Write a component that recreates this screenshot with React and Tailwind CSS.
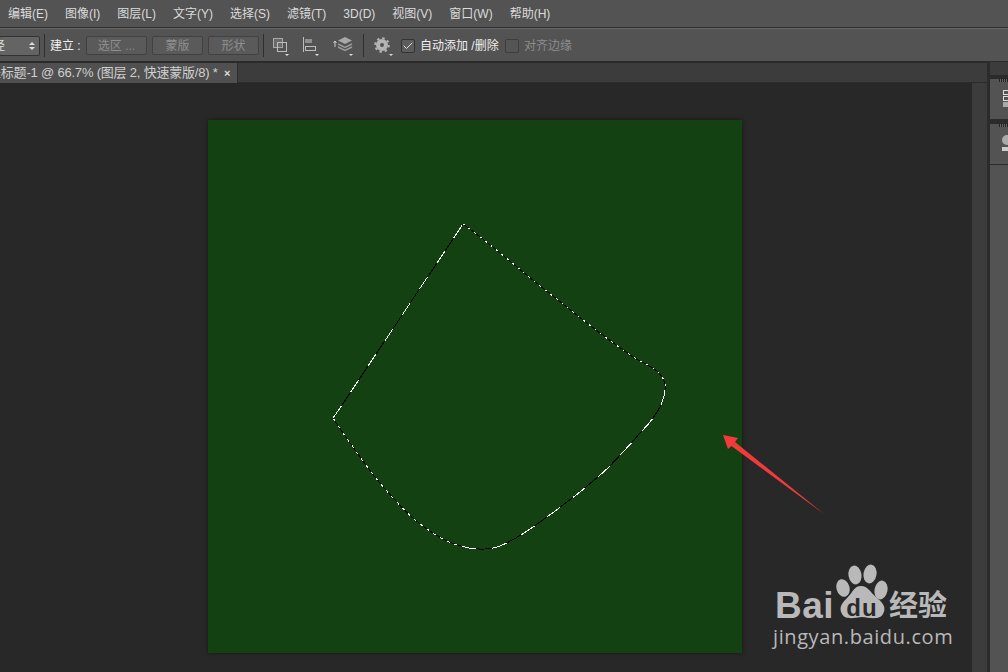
import React from "react";
import { Check } from "lucide-react";

const cjk = { fontFamily: '"Liberation Sans", "Noto Sans CJK SC", sans-serif' };
const menus = ["编辑(E)", "图像(I)", "图层(L)", "文字(Y)", "选择(S)", "滤镜(T)", "3D(D)", "视图(V)", "窗口(W)", "帮助(H)"];

function Sep({ className = "" }) {
  return <div className={"w-px h-[23px] bg-[#2e2e2e] shrink-0 " + className} />;
}

function OptBtn({ w, children }) {
  return (
    <div className={"h-[19px] flex items-center justify-center rounded-[2px] border border-[#414141] bg-[#5a5a5a] text-[12px] text-[#8f8f8f] shrink-0 " + w}>
      {children}
    </div>
  );
}

function PathOpsIcon() {
  return (
    <svg width="18" height="20" viewBox="0 0 18 20" fill="none" className="shrink-0">
      <rect x="1.500" y="2.500" width="9" height="9" stroke="#a8a8a8" fill="#6a6a6a" />
      <rect x="5.500" y="6.500" width="9" height="9" stroke="#bdbdbd" />
      <path d="M13 18h4l-2 2z" fill="#ddd" />
    </svg>
  );
}

function AlignIcon() {
  return (
    <svg width="18" height="20" viewBox="0 0 18 20" fill="none" className="shrink-0">
      <path d="M1.500 1v15" stroke="#bdbdbd" />
      <rect x="3" y="3" width="7" height="4" fill="#8f8f8f" />
      <rect x="3.500" y="10.500" width="10" height="4" stroke="#bdbdbd" />
      <path d="M13 18h4l-2 2z" fill="#ddd" />
    </svg>
  );
}

function StackIcon() {
  return (
    <svg width="22" height="22" viewBox="0 0 22 22" fill="none" className="shrink-0">
      <path d="M2 6v6M0.500 8 2 6l1.500 2" stroke="#ccc" />
      <path d="M12 2l7 3.500-7 3.500-7-3.500z" fill="#a8a8a8" />
      <path d="M5 9l7 3.500 7-3.500M5 12l7 3.500 7-3.500" stroke="#9a9a9a" strokeWidth="1.500" />
      <path d="M16 19h4l-2 2z" fill="#ddd" />
    </svg>
  );
}

function GearIcon() {
  return (
    <svg width="20" height="20" viewBox="0 0 20 20" className="shrink-0">
      <circle cx="8" cy="9" r="4" fill="none" stroke="#b4b4b4" strokeWidth="4" />
      <circle cx="8" cy="9" r="6.800" fill="none" stroke="#b4b4b4" strokeWidth="2" strokeDasharray="2.500 2.840" />
      <path d="M15 18h4l-2 2z" fill="#ddd" />
    </svg>
  );
}

function Grip() {
  return <div className="h-[3px] w-[9px] ml-[9px] mt-[4px] bg-[repeating-linear-gradient(90deg,#222_0,#222_1px,#666_1px,#666_2px)]" />;
}

function Ants() {
  const top = "M463 224C495 247 525 275 558 300C585 322 610 341 633 357C645 364 653 367 658 372C664 378 666 384 665 390";
  const right = "M665 390C664 404 655 418 640 433C630 445 620 455 610 466C590 485 570 500 547 517C532 528 515 540 500 546C490 550 475 550 465 547";
  const left = "M465 547C450 544 438 537 427 529C415 521 405 511 395 500C380 484 365 465 353 447C345 436 338 426 333 418";
  const edge = "M333 418L340 408L463 224";
  return (
    <svg viewBox="208 120 534 533" className="w-full h-full" fill="none" shapeRendering="crispEdges">
      <path d={top} stroke="#000" />
      <path d={top} stroke="#fff" strokeDasharray="2 5" />
      <path d={right} stroke="#000" />
      <path d={right} stroke="#fff" strokeDasharray="16 16" />
      <path d={left} stroke="#000" />
      <path d={left} stroke="#fff" strokeDasharray="3 5" />
      <path d={edge} stroke="#000" />
      <path d={edge} stroke="#fff" strokeDasharray="15 16" />
    </svg>
  );
}

function Arrow() {
  return (
    <svg className="absolute left-0 top-0 pointer-events-none" width="1008" height="672" viewBox="0 0 1008 672">
      <path d="M723 435L738 438L735 442L824 514L731.500 446L728 449z" fill="#f23a3a" />
    </svg>
  );
}

function BaiduMark() {
  return (
    <div className="absolute left-[773px] top-[563px] w-[182px] h-[86px] text-[#b9b9b9]" style={cjk}>
      <svg className="absolute left-[62px] top-0" width="56" height="58" viewBox="0 0 56 58" fill="#b9b9b9">
        <ellipse cx="20" cy="12" rx="6.500" ry="9.500" transform="rotate(-10 20 12)" />
        <ellipse cx="35" cy="11" rx="6.500" ry="9.500" transform="rotate(10 35 11)" />
        <ellipse cx="8" cy="25" rx="6.500" ry="9" transform="rotate(-15 8 25)" />
        <ellipse cx="46" cy="27" rx="6.500" ry="9.500" transform="rotate(12 46 27)" />
        <path d="M26 23C33 23 35 29 41 34C47 39 52 44 48 51C45 57 35 55 27 54C19 55 10 57 7 51C3 44 8 39 13 34C18 29 19 23 26 23z" />
      </svg>
      <span className="absolute left-[2px] top-[28px] text-[37px] leading-[30px] font-bold tracking-[0.5px]">Bai</span>
      <span className="absolute left-[66px] top-[32px] w-[46px] text-center text-[24px] leading-[26px] font-bold tracking-[1px] text-[#2a2a2a]">du</span>
      <span className="absolute left-[116px] top-[27px] text-[29px] leading-[32px] font-bold whitespace-nowrap">经验</span>
      <span className="absolute left-0 top-[62px] text-[20px] leading-[24px] tracking-[0.6px] whitespace-nowrap" style={{ fontFamily: '"Open Sans", sans-serif' }}>jingyan.baidu.com</span>
    </div>
  );
}

export default function App() {
  return (
    <div className="relative w-[1008px] h-[672px] overflow-hidden bg-[#282828] flex flex-col" style={cjk}>
      {/* menu bar */}
      <div className="h-[28px] shrink-0 flex items-center gap-[17px] pl-[8px] bg-[#535353] border-b border-[#2f2f2f] text-[12px] text-[#dcdcdc] whitespace-nowrap">
        {menus.map((m) => (
          <span key={m}>{m}</span>
        ))}
      </div>

      {/* options bar */}
      <div className="h-[35px] shrink-0 flex items-center pt-px bg-[#535353] border-t border-[#666] border-b-[#2a2a2a] border-b-2 text-[12px] whitespace-nowrap">
        <div className="w-[41px] h-[20px] -ml-px flex items-center justify-between overflow-hidden pr-[4px] rounded-[2px] border border-[#333] bg-[#646464] text-[#ddd] shrink-0">
          <span className="-ml-[7px]">径</span>
          <span className="flex flex-col gap-[2px]">
            <span className="w-0 h-0 border-x-[3px] border-x-transparent border-b-[3px] border-b-[#ddd]" />
            <span className="w-0 h-0 border-x-[3px] border-x-transparent border-t-[3px] border-t-[#ddd]" />
          </span>
        </div>
        <Sep className="ml-[4px]" />
        <span className="ml-[5px] w-[36px] text-[#f0f0f0] shrink-0">建立 :</span>
        <OptBtn w="w-[61px]">选区 ...</OptBtn>
        <div className="w-[5px] shrink-0" />
        <OptBtn w="w-[51px]">蒙版</OptBtn>
        <div className="w-[5px] shrink-0" />
        <OptBtn w="w-[51px]">形状</OptBtn>
        <Sep className="ml-[4px]" />
        <div className="ml-[8px]"><PathOpsIcon /></div>
        <div className="ml-[12px]"><AlignIcon /></div>
        <div className="ml-[13px]"><StackIcon /></div>
        <Sep className="ml-[8px]" />
        <div className="ml-[10px]"><GearIcon /></div>
        <div className="ml-[7px] w-[14px] h-[14px] flex items-center justify-center rounded-[2px] border border-[#333] bg-[#5c5c5c] shrink-0">
          <Check size={14} strokeWidth={2} color="#dedede" />
        </div>
        <span className="ml-[5px] w-[80px] text-[#f0f0f0] shrink-0">自动添加 /删除</span>
        <div className="ml-[5px] w-[14px] h-[14px] rounded-[2px] border border-[#3d3d3d] bg-[#555] shrink-0" />
        <span className="ml-[5px] text-[#8c8c8c]">对齐边缘</span>
      </div>

      {/* tab row */}
      <div className="h-[20px] shrink-0 flex bg-[#3c3c3c] border-b border-[#2b2b2b]">
        <div className="w-[238px] h-[20px] relative flex items-center overflow-hidden bg-[#505050] border-r border-[#2f2f2f] text-[13px] tracking-[-0.2px] text-[#cfcfcf] whitespace-nowrap">
          <span className="-ml-[12px] w-[236px] shrink-0">未标题-1 @ 66.7% (图层 2, 快速蒙版/8) *</span>
          <span className="text-[11px] font-bold text-[#ddd] leading-none">×</span>
        </div>
      </div>

      {/* workspace */}
      <div className="flex-1 flex min-h-0">
        <div className="w-[972px] shrink-0 pl-[208px] pt-[37px]">
          <div className="w-[534px] h-[533px] bg-[#144112] shadow-[0_0_4px_rgba(0,0,0,0.5)]">
            <Ants />
          </div>
        </div>
        <div className="w-[15px] shrink-0 bg-[#3c3c3c]" />
      </div>

      {/* right dock */}
      <div className="absolute left-[987px] top-[62px] bottom-0 w-[21px] bg-[#2b2b2b] pl-[3px]">
        <div className="h-[13px] bg-[#3c3c3c]" />
        <div className="h-[41px] bg-[#535353] border-b border-[#2c2c2c]">
          <Grip />
          <div className="ml-[13px] mt-[8px] flex flex-col gap-px">
            <div className="w-[6px] h-[5px] border border-[#ddd]" />
            <div className="w-[6px] h-[5px] border border-[#ddd]" />
            <div className="w-[6px] h-[5px] bg-[#aaa]" />
          </div>
        </div>
        <div className="h-[41px] bg-[#535353] border-b border-[#2c2c2c]">
          <Grip />
          <div className="ml-[12px] mt-[8px] w-[7px] h-[10px] rounded-l-full bg-[#aaa]" />
          <div className="ml-[12px] mt-[2px] w-[7px] h-[4px] bg-[#ccc]" />
        </div>
        <div className="h-full bg-[#535353]" />
      </div>

      <Arrow />
      <BaiduMark />
    </div>
  );
}
